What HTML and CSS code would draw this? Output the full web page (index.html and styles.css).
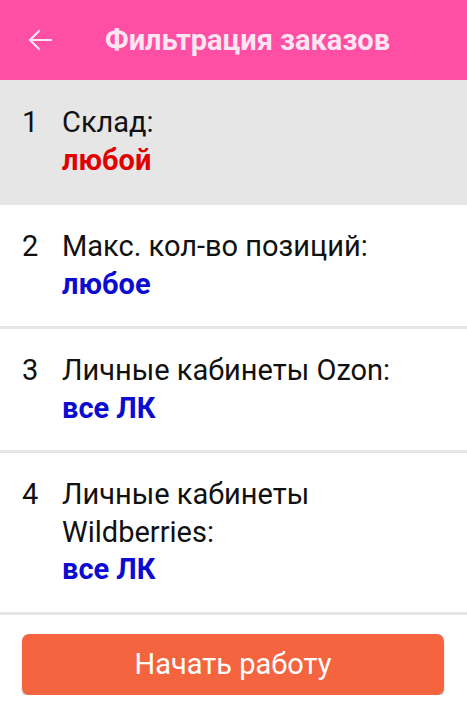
FILE: index.html
```html
<!DOCTYPE html>
<html lang="ru">
<head>
    <meta charset="UTF-8">
    <meta name="viewport" content="width=device-width, initial-scale=1.0">
    <title>Фильтрация заказов</title>
    <link rel="stylesheet" href="styles.css">
</head>
<body>

    <!-- Header -->
    <header class="topbar">
        <span class="back">
            <svg width="26" height="22" viewBox="0 0 26 22">
                <path d="M24 11H3M12 2L3 11l9 9" fill="none" stroke="#fde6f1" stroke-width="2.2" stroke-linecap="round" stroke-linejoin="round"/>
            </svg>
        </span>
        <h1>Фильтрация заказов</h1>
    </header>

    <!-- Filters -->
    <section class="filters">
        <div class="filter active">
            <span class="num">1</span>
            <div class="body">
                <div class="label">Склад:</div>
                <div class="value red">любой</div>
            </div>
        </div>
        <div class="filter">
            <span class="num">2</span>
            <div class="body">
                <div class="label">Макс. кол-во позиций:</div>
                <div class="value">любое</div>
            </div>
        </div>
        <div class="filter">
            <span class="num">3</span>
            <div class="body">
                <div class="label">Личные кабинеты Ozon:</div>
                <div class="value">все ЛК</div>
            </div>
        </div>
        <div class="filter">
            <span class="num">4</span>
            <div class="body">
                <div class="label">Личные кабинеты<br>Wildberries:</div>
                <div class="value">все ЛК</div>
            </div>
        </div>
    </section>

    <!-- Start button -->
    <div class="actions">
        <button class="start">Начать работу</button>
    </div>

</body>
</html>
```

FILE: styles.css
```css
body {
    font-family: Roboto, "Noto Sans", sans-serif;
    margin: 0;
    padding: 0;
    background-color: #fff;
    color: #111;
}
.topbar {
    height: 80px;
    background-color: #ff4fa5;
    display: flex;
    align-items: center;
    padding: 0 0 0 27px;
}
.topbar .back {
    display: flex;
    width: 26px;
    height: 22px;
    margin-right: 52px;
}
.topbar h1 {
    margin: 0;
    font-size: 29px;
    font-weight: bold;
    color: #fde6f1;
}
.filter {
    display: flex;
    padding: 23px 22px 23px 22px;
    border-bottom: 3px solid #e6e6e6;
    font-size: 29px;
    line-height: 37.5px;
}
.filter.active {
    background-color: #e6e6e6;
    padding-top: 24px;
    padding-bottom: 23px;
}
.filter .num {
    width: 40px;
    flex-shrink: 0;
}
.filter .value {
    font-weight: bold;
    color: #0c0cd0;
}
.filter .value.red {
    color: #e00000;
}
.actions {
    padding: 19px 23px 0 22px;
}
.start {
    width: 100%;
    height: 61px;
    border: none;
    border-radius: 7px;
    background-color: #f4643f;
    color: #fff;
    font-family: Roboto, "Noto Sans", sans-serif;
    font-size: 29px;
    box-shadow: 0 2px 2px rgba(0, 0, 0, 0.25);
    cursor: pointer;
}
```
